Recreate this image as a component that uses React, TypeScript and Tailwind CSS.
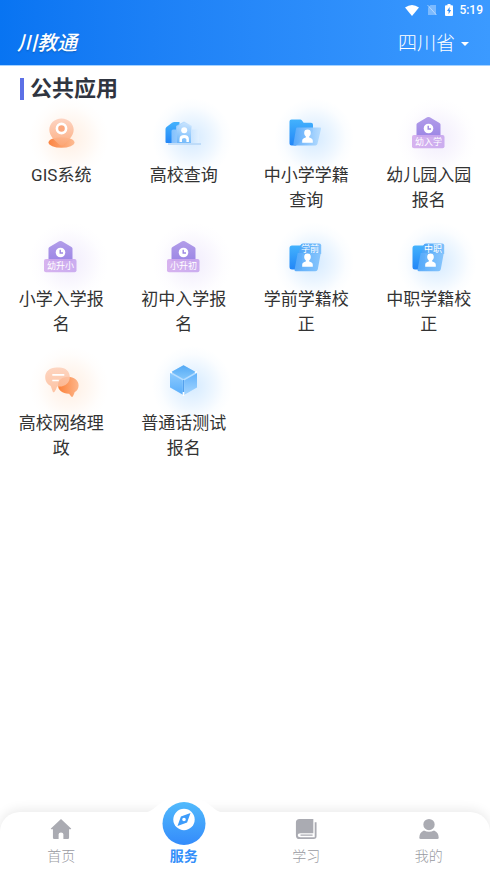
import { ReactNode, useState } from "react";

type IconKind =
  | "pin"
  | "school"
  | "folder"
  | "house"
  | "tabFolder"
  | "chat"
  | "cube";

type AppItem = {
  name: string;
  icon: IconKind;
  tag?: string;
};

const apps: AppItem[] = [
  { name: "GIS系统", icon: "pin" },
  { name: "高校查询", icon: "school" },
  { name: "中小学学籍查询", icon: "folder" },
  { name: "幼儿园入园报名", icon: "house", tag: "幼入学" },
  { name: "小学入学报名", icon: "house", tag: "幼升小" },
  { name: "初中入学报名", icon: "house", tag: "小升初" },
  { name: "学前学籍校正", icon: "tabFolder", tag: "学前" },
  { name: "中职学籍校正", icon: "tabFolder", tag: "中职" },
  { name: "高校网络理政", icon: "chat" },
  { name: "普通话测试报名", icon: "cube" },
];

const glows: Record<IconKind, string> = {
  pin: "url(#glowOrange)",
  school: "url(#glowBlue)",
  folder: "url(#glowBlue)",
  house: "url(#glowPurple)",
  tabFolder: "url(#glowBlue)",
  chat: "url(#glowOrange)",
  cube: "url(#glowBlue)",
};

function Glow({ id, color, opacity }: { id: string; color: string; opacity: number }) {
  return (
    <radialGradient id={id}>
      <stop offset="0" stopColor={color} stopOpacity={opacity} />
      <stop offset="0.5" stopColor={color} stopOpacity={opacity * 0.45} />
      <stop offset="0.8" stopColor={color} stopOpacity={opacity * 0.1} />
      <stop offset="1" stopColor={color} stopOpacity="0" />
    </radialGradient>
  );
}

function Fade({ id, from, to, flat }: { id: string; from: string; to: string; flat?: boolean }) {
  return (
    <linearGradient id={id} x1="0" y1="0" x2={flat ? "1" : "0"} y2={flat ? "0" : "1"}>
      <stop offset="0" stopColor={from} />
      <stop offset="1" stopColor={to} />
    </linearGradient>
  );
}

// Gradients shared by all the app icons
function IconDefs() {
  return (
    <svg className="absolute size-0" aria-hidden="true">
      <defs>
        <Glow id="glowOrange" color="#ffc9a0" opacity={0.3} />
        <Glow id="glowBlue" color="#8fc8ff" opacity={0.38} />
        <Glow id="glowPurple" color="#cdbcf5" opacity={0.28} />
        <Fade id="pinHead" from="#fdd0bd" to="#fca878" />
        <Fade id="pinBase" from="#fb8442" to="#fdbb92" flat />
        <Fade id="blueDark" from="#43b2fd" to="#2286f7" />
        <Fade id="schoolSoft" from="#8cc5fd" to="#e2f1ff" flat />
        <Fade id="schoolMid" from="#cde6ff" to="#5fb0fa" />
        <Fade id="folderFront" from="#59a9fa" to="#b5dcff" flat />
        <Fade id="tabBack" from="#4aa3f8" to="#7fc1fb" flat />
        <Fade id="tabFront" from="#55a9fa" to="#83c3fc" flat />
        <Fade id="purple" from="#b29de9" to="#9c86e5" />
        <Fade id="tag" from="#d3abed" to="#c6a5ee" flat />
        <Fade id="bubbleBack" from="#fdcfb8" to="#fdbb97" />
        <Fade id="bubbleFront" from="#fc8038" to="#fdb68b" flat />
        <Fade id="cubeTop" from="#53a9f5" to="#82c6fc" />
        <Fade id="cubeLeft" from="#8bcafe" to="#5aaefb" />
        <Fade id="cubeRight" from="#62b2fb" to="#a2d4ff" />
      </defs>
    </svg>
  );
}

function Clock() {
  return (
    <>
      <circle cx="59.5" cy="26.5" r="4.8" fill="#fff" />
      <path d="M59.2 23.8v3.2h2.8" fill="none" stroke="#9d88e2" strokeWidth="1.4" />
    </>
  );
}

function Person() {
  return (
    <path
      d="M61.5 27.6a3.3 3.3 0 0 1 3.3 3.4c0 1.6-.7 2.5-1.6 3.2v1.2c2.2.7 3.6 1.3 3.6 3.4v2H56.2v-2c0-2.1 1.4-2.7 3.6-3.4v-1.2c-.9-.7-1.6-1.6-1.6-3.2a3.3 3.3 0 0 1 3.3-3.4z"
      fill="#fff"
    />
  );
}

const shapes: Record<IconKind, ReactNode> = {
  pin: (
    <>
      <ellipse cx="60.5" cy="40.5" rx="13" ry="5.2" fill="url(#pinBase)" />
      <path
        d="M60.5 16.5c7 0 12.2 5 12.2 11.3 0 6.5-6 11.2-9.8 14.6q-2.4 2-4.8 0c-3.8-3.4-9.8-8.1-9.8-14.6 0-6.3 5.2-11.3 12.2-11.3z"
        fill="url(#pinHead)"
        fillOpacity="0.9"
      />
      <circle cx="60.5" cy="26.5" r="4.6" fill="#fba77d" stroke="#fff" strokeWidth="2.6" />
    </>
  ),
  school: (
    <>
      <path d="M41.5 27q0-1.3 1-2.1l5.6-4.2q1-.7 2.2-.7h5.2V41h-13q-1 0-1-1z" fill="url(#blueDark)" />
      <path d="M47.5 41V29q0-1.5 1.5-1.5h3V24l8-4.5 8 4.5v3.5h5.5q1.5 0 1.5 1.5v12z" fill="url(#schoolSoft)" fillOpacity="0.9" />
      <path d="M53 25.5q0-1 1-1.5l6-3.5 6 3.5q1 .5 1 1.5V41H53z" fill="url(#schoolMid)" fillOpacity="0.75" />
      <path d="M44 42h33" stroke="#b4d6f7" strokeWidth="1.6" />
      <circle cx="60.2" cy="28.2" r="3" fill="#fff" />
      <path d="M55.5 40v-3q0-4 4.7-4t4.7 4v3h-2.5v-2.5q0-1.6-2.2-1.6T58 37.500V40z" fill="#fff" />
    </>
  ),
  folder: (
    <>
      <path d="M43.5 19.5q0-2 2-2h8.7q1 0 1.6.8l1.8 2.4h7.4q2 0 2 2V30L50 43.5h-4.5q-2 0-2-2z" fill="url(#blueDark)" />
      <path d="M51.3 25.5H74q1.4 0 1 1.4l-3.6 15.2q-.4 1.4-2 1.4H48.6q-1.5 0-1.2-1.5L50 26.7q.2-1.2 1.3-1.2z" fill="url(#folderFront)" fillOpacity="0.94" />
      <Person />
    </>
  ),
  house: (
    <>
      <path d="M47.5 22.6q0-1.1 1-1.7l9.7-5.6q1.3-.8 2.6 0l9.7 5.6q1 .6 1 1.7V35h-24z" fill="url(#purple)" />
      <Clock />
      <rect x="43" y="33" width="32.5" height="13.2" rx="2" fill="url(#tag)" fillOpacity="0.9" />
    </>
  ),
  tabFolder: (
    <>
      <path d="M43.5 22q0-2.5 2.5-2.5h10V43.5H46q-2.5 0-2.5-2.5z" fill="url(#blueDark)" />
      <path d="M54.5 19.3q.5-1.8 2.4-1.8h16.3q2 0 2 2V28H52.3z" fill="url(#tabBack)" />
      <path d="M51.7 27h23.1l-3 16.2q-.4 2-2.4 2H50q-1.8 0-1.4-1.8z" fill="url(#tabFront)" fillOpacity="0.96" />
      <Person />
    </>
  ),
  chat: (
    <>
      <path
        d="M67 26.8c6.1 0 10.6 3.6 10.6 8.7 0 3-1.5 5.3-4 6.8-.5 1.8-1 3-1.8 4.1-.5.7-1.1.6-1.6 0l-2.1-2.6c-6.4.2-11.1-3.5-11.1-8.5s4-8.5 10-8.5z"
        fill="url(#bubbleFront)"
      />
      <path
        d="M55.5 17.5h3c6.1 0 10.3 4 10.3 9.4s-4.2 9.6-10.3 9.6h-2.4c-.6 2-1.5 3.9-2.7 5.4-.6.7-1.2.6-1.6-.2l-2.1-5.8c-3.4-1.5-5.5-4.8-5.5-9 0-5.4 4.6-9.4 11.3-9.4z"
        fill="url(#bubbleBack)"
        fillOpacity="0.86"
      />
      <path d="M51.3 24.8h12M51.3 30.5h6.5" stroke="#fff" strokeWidth="1.7" />
    </>
  ),
  cube: (
    <>
      <path d="M59.5 15.2L73 22.7v14.8l-13.5 7.7L46 37.5V22.7z" fill="#a9d7ff" />
      <path d="M59.5 15.2L71.7 22l-12.2 7-12.2-7z" fill="url(#cubeTop)" />
      <path d="M46 23.2l12.8 7.2v14L46 37.3z" fill="url(#cubeLeft)" />
      <path d="M73 23.2l-12.8 7.2v14L73 37.3z" fill="url(#cubeRight)" />
      <path d="M47.5 23.2l12 6.8 12-6.8" fill="none" stroke="#bfe1ff" strokeWidth="0.7" />
      <path d="M59.5 30v12" stroke="#3f93e8" strokeWidth="0.8" />
      <path d="M46 21.5l2 1.2M73 21.5l-2 1.2M59.5 42v4" stroke="#fff" strokeWidth="1.6" />
    </>
  ),
};

function AppIcon({ icon, tag }: { icon: IconKind; tag?: string }) {
  return (
    <svg viewBox="0 0 120 61" className="h-[61px] w-[120px] overflow-visible" aria-hidden="true">
      <circle cx="68" cy="36" r="40" fill={glows[icon]} />
      {shapes[icon]}
      {tag && (
        <text
          x={icon === "house" ? 59.5 : 64}
          y={icon === "house" ? 43 : 26}
          textAnchor="middle"
          fill="#fff"
          fontSize={9}
        >
          {tag}
        </text>
      )}
    </svg>
  );
}

function StatusBar() {
  return (
    <div className="flex h-5 items-center justify-end pr-[7px] text-white">
      <svg viewBox="0 0 14 11" className="mr-2 h-[11px] w-[14px]" aria-hidden="true">
        <path d="M0 2.6Q7-2.4 14 2.6L7 11z" fill="#fff" />
      </svg>
      <svg viewBox="0 0 10 12" className="mr-2 h-3 w-[10px]" aria-hidden="true">
        <path d="M3.5 1H9v10H1V3.5z" fill="#fff" fillOpacity="0.35" />
        <path d="M.5 1l9 10" stroke="#d5e8ff" strokeOpacity="0.7" strokeWidth="0.9" />
      </svg>
      <svg viewBox="0 0 8 12" className="mr-[6px] h-3 w-2" aria-hidden="true">
        <path d="M2.5 0h3v1.2H7q1 0 1 1V11q0 1-1 1H1q-1 0-1-1V2.2q0-1 1-1h1.5z" fill="#fff" />
        <path d="M4.6 3L2 7.1h1.6v3.2L6.1 6H4.6z" fill="#2f8ffa" />
      </svg>
      <span className="text-[12px] leading-5 font-medium">5:19</span>
    </div>
  );
}

const tabs: { name: string; icon: ReactNode }[] = [
  {
    name: "首页",
    icon: <path d="M12 1.2L23 11.4q.5.9-.6.9h-1.6v9.2q0 1.3-1.3 1.3h-4.9v-5q0-2-2.6-2t-2.6 2v5H4.5q-1.3 0-1.3-1.3v-9.2H1.6q-1.1 0-.6-.9z" />,
  },
  { name: "服务", icon: null },
  {
    name: "学习",
    icon: (
      <path
        fillRule="evenodd"
        d="M5 1h15v15.5H6q-3 0-3 2.3T6 21h15.5V4.5h2V20q0 3-3 3H5q-4 0-4-4V5q0-4 4-4zM6 18.1h13.2v1.3H6z"
      />
    ),
  },
  {
    name: "我的",
    icon: <path d="M12 1a6.2 6.2 0 1 1 0 12.4A6.2 6.2 0 0 1 12 1zM6.5 13.5Q12 16.6 17.5 13.5 22.6 15.5 22.6 21.5q0 1.5-1.6 1.5H3q-1.6 0-1.6-1.5Q1.4 15.5 6.5 13.5z" />,
  },
];

export default function App() {
  const [active, setActive] = useState("服务");

  return (
    <div className="flex min-h-screen flex-col bg-white font-[Roboto,'Noto_Sans_CJK_SC',sans-serif]">
      <IconDefs />

      {/* Header */}
      <header className="border-b border-[#a5d2ff] bg-linear-to-r from-[#0874f2] to-[#3b9aff]">
        <StatusBar />
        <div className="flex h-[45px] items-center justify-between pr-[21px] pl-[17px] text-white">
          <h1 className="text-[20px] leading-6 font-medium italic text-shadow-sm">川教通</h1>
          <button className="flex items-center gap-[6px] pt-[2px] text-[19px] leading-6 font-light">
            四川省
            <span className="border-x-4 border-t-4 border-x-transparent border-t-white" />
          </button>
        </div>
      </header>

      {/* Apps */}
      <main className="flex-1">
        <h2 className="flex h-9 items-center gap-[6px] pt-[10px] pl-5 text-[22px] leading-8 font-bold text-[#303540]">
          <span className="h-[22px] w-1 bg-[#5c70e6]" />
          公共应用
        </h2>
        <div className="grid grid-cols-4 gap-y-[13px]">
          {apps.map((app) => (
            <a
              key={app.name}
              href="#"
              className="flex flex-col items-center text-[17px] leading-[25px] text-[#333]"
            >
              <AppIcon icon={app.icon} tag={app.tag} />
              <span className="px-4 text-center">{app.name}</span>
            </a>
          ))}
        </div>
      </main>

      {/* Bottom tabs */}
      <nav className="sticky bottom-0 grid grid-cols-4 rounded-t-[20px] bg-white shadow-[0_-2px_12px_rgba(0,0,0,0.09)]">
        {tabs.map((tab) => (
          <button
            key={tab.name}
            onClick={() => setActive(tab.name)}
            className={
              active === tab.name
                ? "relative flex h-[60px] flex-col items-center justify-end pb-[6px] text-[14px] leading-5 font-bold text-[#348ffa]"
                : "relative flex h-[60px] flex-col items-center justify-end pb-[6px] text-[14px] leading-5 font-light text-[#999aa1]"
            }
          >
            {tab.icon ? (
              <svg viewBox="0 0 24 24" className="mb-[6px] size-[22px]" fill="#aaabb2" aria-hidden="true">
                {tab.icon}
              </svg>
            ) : (
              <svg
                viewBox="0 0 80 52"
                className="absolute -top-[16px] left-1/2 h-[52px] w-20 -translate-x-1/2"
                aria-hidden="true"
              >
                <defs>
                  <Fade id="compass" from="#51bafc" to="#348bfb" />
                </defs>
                <path d="M0 16.5C12 16.5 15 0 40 0s28 16.5 40 16.5V30H0z" fill="#fff" />
                <circle cx="40" cy="27.5" r="21.5" fill="url(#compass)" />
                <circle cx="40" cy="23.5" r="10.7" fill="#fff" />
                <path
                  fillRule="evenodd"
                  d="M46.5 17l-3.4 9.4-9.6 3.6 3.4-9.4zM40 21.7a1.8 1.8 0 1 0 0 3.6 1.8 1.8 0 0 0 0-3.6z"
                  fill="#3d9cfb"
                />
              </svg>
            )}
            {tab.name}
          </button>
        ))}
      </nav>
    </div>
  );
}
